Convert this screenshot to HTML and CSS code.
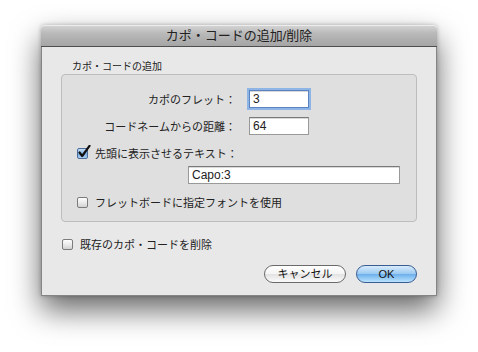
FILE: index.html
```html
<!DOCTYPE html>
<html lang="ja">
<head>
    <meta charset="UTF-8">
    <title>カポ・コードの追加/削除</title>
    <link rel="stylesheet" href="styles.css">
</head>
<body>
    <div class="window">
        <div class="titlebar">カポ・コードの追加/削除</div>
        <div class="content">
            <div class="group-label">カポ・コードの追加</div>
            <div class="group">
                <div class="field-row first">
                    <label class="field-label">カポのフレット：</label>
                    <div class="text-input focused">3</div>
                </div>
                <div class="field-row second">
                    <label class="field-label">コードネームからの距離：</label>
                    <div class="text-input">64</div>
                </div>
                <div class="check-row third">
                    <span class="checkbox checked">
                        <svg width="14" height="14" viewBox="0 0 14 14">
                            <path d="M2.5 7.5 L5.2 11 L12.5 0.8" fill="none" stroke="#111" stroke-width="2.2" stroke-linecap="round" stroke-linejoin="round"/>
                        </svg>
                    </span>
                    <span>先頭に表示させるテキスト：</span>
                </div>
                <div class="text-input wide">Capo:3</div>
                <div class="check-row fifth">
                    <span class="checkbox"></span>
                    <span>フレットボードに指定フォントを使用</span>
                </div>
            </div>
            <div class="check-row outside">
                <span class="checkbox"></span>
                <span>既存のカポ・コードを削除</span>
            </div>
            <div class="buttons">
                <button class="btn">キャンセル</button>
                <button class="btn default">OK</button>
            </div>
        </div>
    </div>
</body>
</html>
```

FILE: styles.css
```css
html {
    height: 100%;
    background: #ffffff;
}
body {
    box-sizing: border-box;
    min-height: 100%;
    margin: 0;
    padding: 25px 0 0 41px;
    background: #ffffff;
    font-family: "Liberation Sans", "Noto Sans CJK JP", sans-serif;
    font-size: 11px;
    color: #222;
}
.window {
    width: 396px;
    border-radius: 4px 4px 0 0;
    box-shadow: 0 14px 30px rgba(0,0,0,0.6), 0 0 4px rgba(0,0,0,0.25);
    background: #e8e8e8;
}
.titlebar {
    height: 21px;
    line-height: 21px;
    text-align: center;
    font-size: 13px;
    color: #222;
    border-radius: 4px 4px 0 0;
    border-bottom: 1px solid #4e4e4e;
    background: linear-gradient(#d6d6d6, #b9b9b9 40%, #a5a5a5);
    box-shadow: inset 0 1px 0 #ededed;
}
.content {
    border: 1px solid #858585;
    border-top: none;
    padding: 14px 19px 12px 19px;
}
.group-label {
    font-size: 10px;
    line-height: 12px;
    height: 12px;
    margin: 0 0 1px 11px;
}
.group {
    border: 1px solid #bdbdbd;
    border-radius: 4px;
    background: #dfdfdf;
    padding: 0 0 12px 0;
}
.field-row {
    display: grid;
    grid-template-columns: 174px 60px;
    column-gap: 13px;
    align-items: center;
    height: 18px;
}
.field-row.first { margin-top: 15px; }
.field-row.second { margin-top: 9px; }
.field-label {
    text-align: right;
}
.text-input {
    box-sizing: border-box;
    height: 18px;
    padding: 0 3px;
    line-height: 16px;
    font-size: 12px;
    background: #fff;
    border: 1px solid #999;
    border-top-color: #7a7a7a;
    box-shadow: inset 0 1px 0 #d8d8d8;
}
.text-input.focused {
    border-color: #5b83c0;
    box-shadow: 0 0 0 2px #8fb5e6, inset 0 1px 0 #d8d8d8;
}
.text-input.wide {
    width: 212px;
    margin: 6px 0 0 126px;
}
.check-row {
    display: flex;
    align-items: center;
    gap: 7px;
    height: 14px;
}
.check-row.third { margin: 11px 0 0 15px; }
.check-row.fifth { margin: 11px 0 0 15px; }
.check-row.outside { margin: 15px 0 0 1px; }
.checkbox {
    position: relative;
    box-sizing: border-box;
    width: 11px;
    height: 11px;
    border: 1px solid #7c7c7c;
    border-radius: 2px;
    background: linear-gradient(#ffffff, #e6e6e6 60%, #d2d2d2);
    flex: none;
}
.checkbox.checked {
    border-color: #4a6a9a;
    background: linear-gradient(#c6def5, #7eaedf 55%, #a8d0f2);
}
.checkbox svg {
    position: absolute;
    left: -1px;
    top: -4px;
}
.buttons {
    display: flex;
    justify-content: flex-end;
    gap: 10px;
    margin-top: 14px;
}
.btn {
    box-sizing: border-box;
    height: 18px;
    padding: 0;
    font-family: "Liberation Sans", "Noto Sans CJK JP", sans-serif;
    font-size: 11px;
    line-height: 16px;
    color: #111;
    border: 1px solid #6a6a6a;
    border-radius: 9px;
    background: linear-gradient(#ffffff, #f4f4f4 50%, #e2e2e2 51%, #fbfbfb);
    width: 82px;
}
.btn.default {
    width: 61px;
    border-color: #3a5d93;
    background: linear-gradient(#d7ecfc, #9dcaf2 48%, #6eb0ec 52%, #b9e3fd);
}
```
